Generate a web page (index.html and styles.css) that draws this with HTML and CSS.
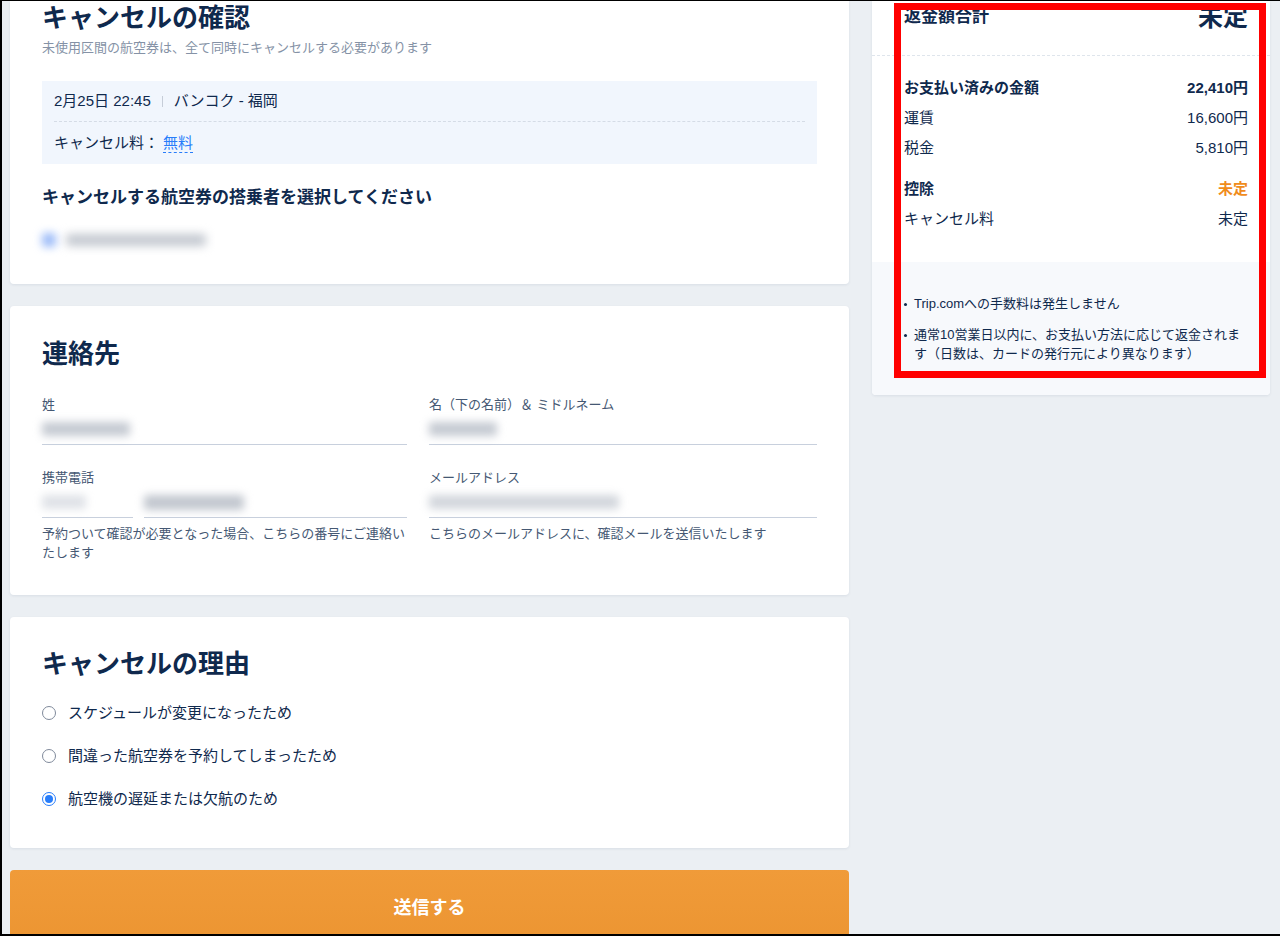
FILE: index.html
```html
<!DOCTYPE html>
<html lang="ja">
<head>
    <meta charset="UTF-8">
    <meta name="viewport" content="width=device-width, initial-scale=1.0">
    <title>キャンセルの確認</title>
    <link rel="stylesheet" href="styles.css">
</head>
<body>
    <div class="frame">
        <div class="layout">
            <main class="main">
                <section class="card card-top">
                    <h1 class="card-title">キャンセルの確認</h1>
                    <p class="subtitle">未使用区間の航空券は、全て同時にキャンセルする必要があります</p>
                    <div class="flight">
                        <div class="flight-row">2月25日 22:45<span class="sep"></span>バンコク - 福岡</div>
                        <div class="flight-row">キャンセル料： <span class="free">無料</span></div>
                    </div>
                    <h2 class="section-title">キャンセルする航空券の搭乗者を選択してください</h2>
                    <div class="passenger">
                        <span class="blur blur-check"></span>
                        <span class="blur blur-passenger"></span>
                    </div>
                </section>

                <section class="card card-contact">
                    <h1 class="card-title">連絡先</h1>
                    <div class="fields">
                        <div class="field">
                            <label class="field-label">姓</label>
                            <div class="field-input"><span class="blur blur-last"></span></div>
                        </div>
                        <div class="field">
                            <label class="field-label">名（下の名前）＆ ミドルネーム</label>
                            <div class="field-input"><span class="blur blur-first"></span></div>
                        </div>
                        <div class="field">
                            <label class="field-label">携帯電話</label>
                            <div class="phone">
                                <div class="field-input phone-code"><span class="blur blur-code"></span></div>
                                <div class="field-input phone-num"><span class="blur blur-phone"></span></div>
                            </div>
                            <p class="field-help">予約ついて確認が必要となった場合、こちらの番号にご連絡いたします</p>
                        </div>
                        <div class="field">
                            <label class="field-label">メールアドレス</label>
                            <div class="field-input"><span class="blur blur-mail"></span></div>
                            <p class="field-help">こちらのメールアドレスに、確認メールを送信いたします</p>
                        </div>
                    </div>
                </section>

                <section class="card card-reason">
                    <h1 class="card-title">キャンセルの理由</h1>
                    <ul class="reasons">
                        <li class="reason"><span class="radio"></span>スケジュールが変更になったため</li>
                        <li class="reason"><span class="radio"></span>間違った航空券を予約してしまったため</li>
                        <li class="reason"><span class="radio checked"></span>航空機の遅延または欠航のため</li>
                    </ul>
                </section>

                <button class="submit">送信する</button>
            </main>

            <aside class="side">
                <div class="refund">
                    <div class="refund-head">
                        <span class="refund-title">返金額合計</span>
                        <span class="refund-total">未定</span>
                    </div>
                    <div class="refund-body">
                        <div class="row row-bold"><span>お支払い済みの金額</span><span>22,410円</span></div>
                        <div class="row"><span>運賃</span><span>16,600円</span></div>
                        <div class="row"><span>税金</span><span>5,810円</span></div>
                        <div class="row row-bold row-gap"><span>控除</span><span class="orange">未定</span></div>
                        <div class="row"><span>キャンセル料</span><span>未定</span></div>
                    </div>
                    <ul class="notes">
                        <li>Trip.comへの手数料は発生しません</li>
                        <li>通常10営業日以内に、お支払い方法に応じて返金されます（日数は、カードの発行元により異なります）</li>
                    </ul>
                </div>
                <div class="highlight"></div>
            </aside>
        </div>
    </div>
</body>
</html>
```

FILE: styles.css
```css
body {
    margin: 0;
    font-family: "Liberation Sans", "Noto Sans CJK JP", sans-serif;
    color: #0f294d;
    background-color: #ebeff3;
}

.frame {
    height: 936px;
    box-sizing: border-box;
    border-top: 1px solid #000;
    border-left: 2px solid #000;
    border-bottom: 2px solid #000;
    overflow: hidden;
}

.layout {
    display: flex;
    gap: 23px;
    padding: 0 10px 0 8px;
}

.main {
    width: 839px;
    display: flex;
    flex-direction: column;
    gap: 22px;
}

.card {
    background-color: #fff;
    border-radius: 4px;
    box-shadow: 0 1px 3px rgba(15, 41, 77, 0.08);
    padding: 0 32px;
}

.card-top {
    border-radius: 0 0 4px 4px;
    padding-bottom: 32px;
}

.card-title {
    margin: 0;
    font-size: 26px;
    line-height: 34px;
    font-weight: bold;
}

.subtitle {
    margin: 4px 0 0;
    font-size: 13px;
    line-height: 18px;
    color: #8592a6;
}

/* flight box */
.flight {
    margin-top: 24px;
    background-color: #f1f6fd;
    padding: 0 12px;
}

.flight-row {
    display: flex;
    align-items: center;
    font-size: 15px;
    line-height: 20px;
    padding: 10px 0;
}

.flight-row + .flight-row {
    border-top: 1px dashed #d5dce6;
    padding: 11px 0 11px;
}

.sep {
    width: 1px;
    height: 11px;
    background-color: #c6cdd8;
    margin: 0 11px;
}

.free {
    color: #287dfa;
    margin-left: 4px;
    border-bottom: 1px dashed #287dfa;
    line-height: 18px;
}

.section-title {
    margin: 22px 0 0;
    font-size: 17px;
    line-height: 24px;
    font-weight: bold;
}

.passenger {
    display: flex;
    align-items: center;
    gap: 10px;
    height: 24px;
    margin-top: 18px;
}

/* blurred personal data */
.blur {
    display: inline-block;
    filter: blur(4px);
    border-radius: 3px;
}

.blur-check {
    width: 14px;
    height: 14px;
    background-color: #9dbcf8;
}

.blur-passenger {
    width: 140px;
    height: 12px;
    background-color: #c3c8d0;
    filter: blur(5px);
}

/* contact */
.card-contact {
    padding-top: 31px;
    padding-bottom: 33px;
}

.fields {
    display: grid;
    grid-template-columns: 365px 1fr;
    column-gap: 22px;
    row-gap: 24px;
    margin-top: 25px;
}

.field-label {
    display: block;
    font-size: 13px;
    line-height: 18px;
    color: #455873;
}

.field-input {
    height: 30px;
    border-bottom: 1px solid #c8d0dd;
    display: flex;
    align-items: center;
}

.phone {
    display: flex;
    gap: 11px;
}

.phone-code {
    width: 91px;
}

.phone-num {
    flex: 1;
}

.blur-last {
    width: 88px;
    height: 14px;
    background-color: #c5cad2;
}

.blur-first {
    width: 68px;
    height: 14px;
    background-color: #c5cad2;
}

.blur-code {
    width: 44px;
    height: 14px;
    background-color: #dfe2e7;
}

.blur-phone {
    width: 100px;
    height: 15px;
    background-color: #c2c7cf;
}

.blur-mail {
    width: 190px;
    height: 14px;
    background-color: #d2d6dc;
}

.field-help {
    margin: 6px 0 0;
    font-size: 13px;
    line-height: 19px;
    color: #455873;
}

/* reason */
.card-reason {
    padding-top: 30px;
    padding-bottom: 38px;
}

.reasons {
    list-style: none;
    margin: 21px 0 0;
    padding: 0;
}

.reason {
    display: flex;
    align-items: center;
    font-size: 15px;
    line-height: 22px;
    color: #0f294d;
}

.reason + .reason {
    margin-top: 21px;
}

.radio {
    width: 14px;
    height: 14px;
    box-sizing: border-box;
    border: 1px solid #7f8a9b;
    border-radius: 50%;
    margin-right: 12px;
    position: relative;
}

.radio.checked {
    border-color: #287dfa;
}

.radio.checked::after {
    content: "";
    position: absolute;
    left: 2px;
    top: 2px;
    width: 8px;
    height: 8px;
    border-radius: 50%;
    background-color: #287dfa;
}

.submit {
    height: 72px;
    border: none;
    border-radius: 4px 4px 0 0;
    background: linear-gradient(#f09b39, #ec9532);
    color: #fff;
    font-family: inherit;
    font-size: 18px;
    font-weight: bold;
    padding: 0;
    cursor: pointer;
}

/* side panel */
.side {
    width: 398px;
    position: relative;
}

.refund {
    background-color: #fff;
    border-radius: 0 0 4px 4px;
    box-shadow: 0 1px 3px rgba(15, 41, 77, 0.08);
    overflow: hidden;
}

.refund-head {
    display: flex;
    justify-content: space-between;
    align-items: flex-start;
    padding: 0 22px 0 32px;
    height: 54px;
    border-bottom: 1px dashed #dfe5ec;
}

.refund-title {
    font-size: 17px;
    line-height: 32px;
    font-weight: bold;
}

.refund-total {
    font-size: 25px;
    line-height: 32px;
    font-weight: bold;
}

.refund-body {
    padding: 21px 22px 32px 32px;
}

.row {
    display: flex;
    justify-content: space-between;
    font-size: 15px;
    line-height: 22px;
    margin-bottom: 8px;
}

.row:last-child {
    margin-bottom: 0;
}

.row-bold {
    font-weight: bold;
}

.row-gap {
    margin-top: 19px;
}

.orange {
    color: #f08c1c;
}

.notes {
    background-color: #f7f9fc;
    margin: 0;
    padding: 32px 22px 32px 32px;
    list-style: none;
}

.notes li {
    position: relative;
    padding-left: 10px;
    font-size: 13px;
    line-height: 19px;
    color: #0f294d;
}

.notes li + li {
    margin-top: 12px;
}

.notes li::before {
    content: "";
    position: absolute;
    left: 0;
    top: 9px;
    width: 3px;
    height: 3px;
    border-radius: 50%;
    background-color: #0f294d;
}

/* annotation box drawn over the summary */
.highlight {
    position: absolute;
    left: 22px;
    top: 2px;
    right: 4px;
    height: 375px;
    box-sizing: border-box;
    border: 7px solid #ff0000;
}
```
